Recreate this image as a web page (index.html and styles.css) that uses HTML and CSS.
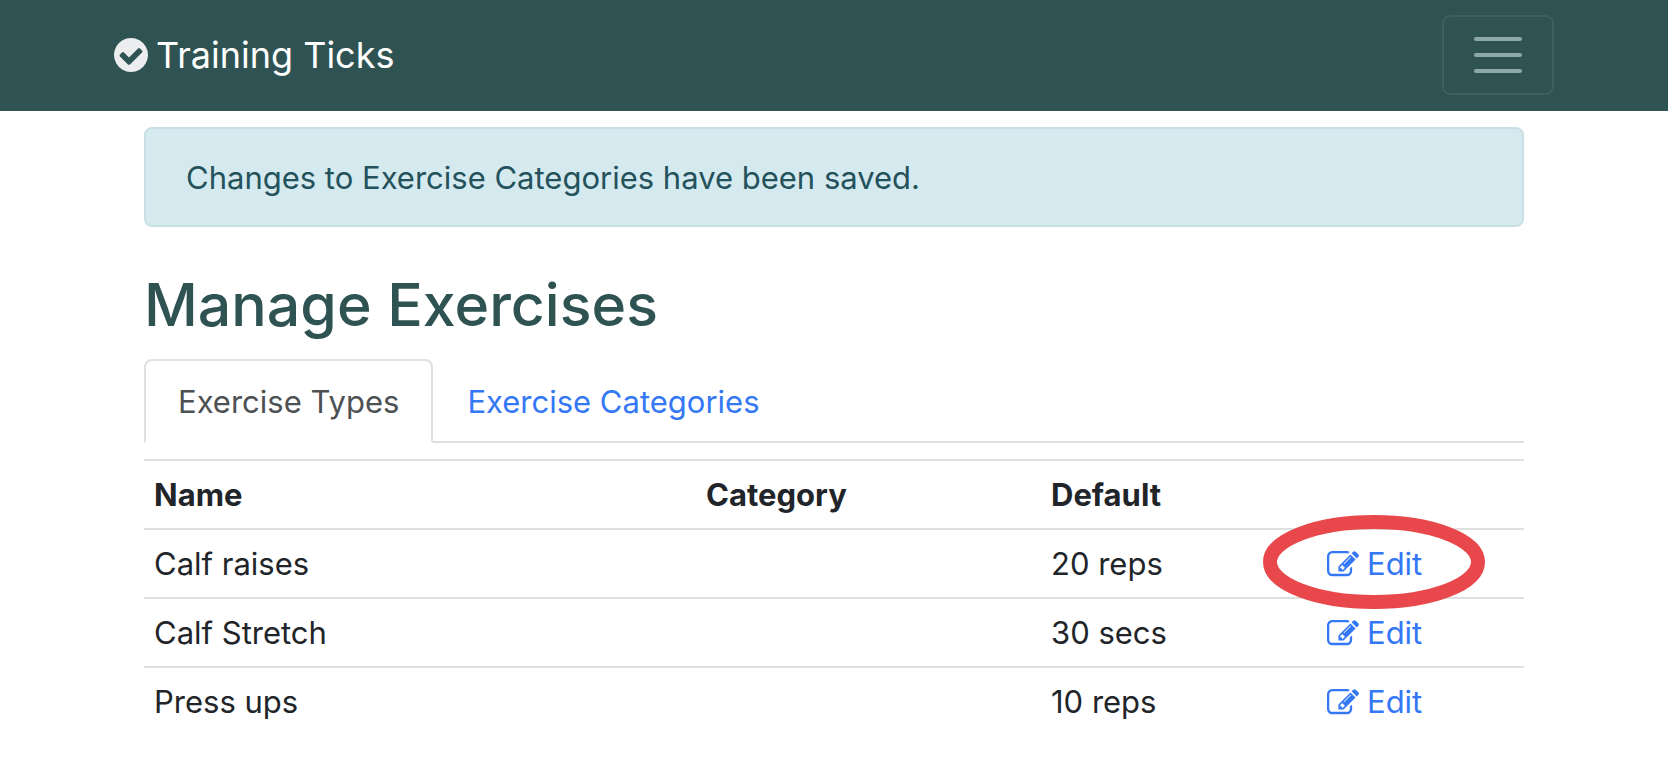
FILE: index.html
```html
<!DOCTYPE html>
<html lang="en">
<head>
<meta charset="utf-8">
<meta name="viewport" content="width=device-width, initial-scale=1">
<title>Manage Exercises - Training Ticks</title>
<link rel="stylesheet" href="styles.css">
</head>
<body>
<svg class="sprite" aria-hidden="true">
  <symbol id="icon-edit" viewBox="0 128 1792 1456">
    <path d="M888 1184l116-116-152-152-116 116v56h96v96h56zm440-720q-16-16-33 1l-350 350q-17 17-1 33t33-1l350-350q17-17 1-33zm80 594v190q0 119-84.500 203.500t-203.500 84.500h-832q-119 0-203.500-84.500t-84.500-203.500v-832q0-119 84.500-203.500t203.500-84.500h832q63 0 117 25 15 7 18 23 3 17-9 29l-49 49q-14 14-32 8-23-6-45-6h-832q-66 0-113 47t-47 113v832q0 66 47 113t113 47h832q66 0 113-47t47-113v-126q0-13 9-22l64-64q15-15 35-7t20 29zm-96-738l288 288-672 672h-288v-288zm444 132l-92 92-288-288 92-92q28-28 68-28t68 28l152 152q28 28 28 68t-28 68z"/>
  </symbol>
</svg>
<header class="navbar">
  <div class="navbar-inner">
    <a class="brand" href="#">
      <svg class="brand-icon" viewBox="128 128 1536 1536" aria-hidden="true"><path d="M1412 734q0-28-18-46l-91-90q-19-19-45-19t-45 19l-408 407-226-226q-19-19-45-19t-45 19l-91 90q-18 18-18 46 0 27 18 45l362 362q19 19 45 19 27 0 46-19l543-543q18-18 18-45zm252 162q0 209-103 385.500t-279.500 279.500-385.500 103-385.500-103-279.500-279.500-103-385.500 103-385.500 279.500-279.500 385.500-103 385.500 103 279.500 279.500 103 385.500z"/></svg>
      <span>Training Ticks</span>
    </a>
    <button class="toggler" type="button" aria-label="Toggle navigation">
      <svg class="toggler-icon" viewBox="0 0 60 60" aria-hidden="true"><path d="M8 14h44M8 30h44M8 46h44"/></svg>
    </button>
  </div>
</header>
<main class="container">
  <div class="alert" role="status">Changes to Exercise Categories have been saved.</div>
  <h1 class="title">Manage Exercises</h1>
  <nav class="tabs">
    <a class="tab tab-active" href="#" aria-current="page">Exercise Types</a>
    <a class="tab" href="#">Exercise Categories</a>
  </nav>
  <table class="table">
    <thead>
      <tr><th class="col-name">Name</th><th class="col-category">Category</th><th class="col-default">Default</th><th class="col-action"></th></tr>
    </thead>
    <tbody>
      <tr>
        <td>Calf raises</td><td></td><td>20 reps</td>
        <td><span class="marked"><a class="edit" href="#"><svg class="edit-icon" aria-hidden="true"><use href="#icon-edit"/></svg>Edit</a><svg class="ring" viewBox="0 0 224 96" aria-hidden="true"><ellipse cx="111" cy="46" rx="104" ry="40"/></svg></span></td>
      </tr>
      <tr>
        <td>Calf Stretch</td><td></td><td>30 secs</td>
        <td><a class="edit" href="#"><svg class="edit-icon" aria-hidden="true"><use href="#icon-edit"/></svg>Edit</a></td>
      </tr>
      <tr>
        <td>Press ups</td><td></td><td>10 reps</td>
        <td><a class="edit" href="#"><svg class="edit-icon" aria-hidden="true"><use href="#icon-edit"/></svg>Edit</a></td>
      </tr>
    </tbody>
  </table>
</main>
</body>
</html>
```
FILE: styles.css
```css
* {
  box-sizing: border-box;
}

body {
  margin: 0;
  background: #fff;
  color: #212529;
  font-family: Inter, "Liberation Sans", sans-serif;
  font-size: 31px;
  line-height: 48px;
}

a {
  color: #3478f6;
  text-decoration: none;
}

.sprite {
  display: block;
  width: 0;
  height: 0;
}

.navbar {
  padding: 15px 16px 16px;
  background: #2e5352;
}

.navbar-inner {
  display: flex;
  align-items: center;
  justify-content: space-between;
  max-width: 1440px;
  margin: 0 auto;
}

.brand {
  display: flex;
  align-items: center;
  gap: 8px;
  color: #fff;
  font-size: 36px;
}

.brand-icon {
  width: 34px;
  height: 34px;
  fill: #ebedee;
}

.toggler {
  display: flex;
  align-items: center;
  padding: 8px 24px;
  border: 2px solid #3d605f;
  border-radius: 8px;
  background: transparent;
}

.toggler-icon {
  width: 60px;
  height: 60px;
  fill: none;
  stroke: #8ea8a8;
  stroke-width: 4;
  stroke-linecap: round;
}

.container {
  max-width: 1440px;
  margin: 0 auto;
  padding: 16px 30px;
}

.alert {
  padding: 25px 40px 23px;
  border: 2px solid #c8e0e5;
  border-radius: 8px;
  background: #d5eaef;
  color: #24525c;
}

.title {
  margin: 40px 0 16px;
  color: #2e5352;
  font-size: 59px;
  font-weight: 500;
  line-height: 76px;
}

.tabs {
  display: flex;
  border-bottom: 2px solid #dee0e2;
}

.tab {
  margin-bottom: -2px;
  padding: 17px 32px 15px;
  border: 2px solid transparent;
  border-radius: 8px 8px 0 0;
}

.tab-active {
  border-color: #dee0e2 #dee0e2 #fff;
  background: #fff;
  color: #4d5154;
}

.table {
  width: 100%;
  margin-top: 16px;
  border-collapse: collapse;
  table-layout: fixed;
}

.table th,
.table td {
  padding: 10px 10px 9px;
  border-top: 2px solid #dee0e2;
  text-align: left;
}

.table th {
  font-weight: 700;
}

.col-name {
  width: 40%;
}

.col-category {
  width: 25%;
}

.col-default {
  width: 20%;
}

.col-action {
  width: 15%;
}

.edit {
  display: flex;
  align-items: center;
  gap: 8px;
}

.edit-icon {
  width: 32px;
  height: 26px;
  fill: currentColor;
}

.marked {
  display: inline-flex;
  position: relative;
  vertical-align: top;
}

.ring {
  position: absolute;
  top: 50%;
  left: 50%;
  width: 224px;
  height: 96px;
  overflow: visible;
  transform: translate(-50%, -50%);
  fill: none;
  stroke: #e8474b;
  stroke-width: 14;
  pointer-events: none;
}
```
